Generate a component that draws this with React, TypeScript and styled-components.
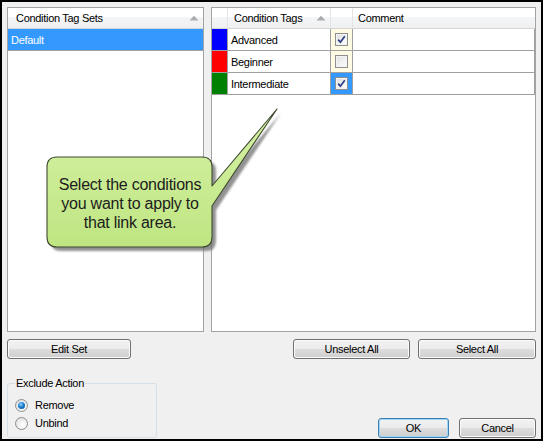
import React from "react";
import styled, { createGlobalStyle } from "styled-components";

const GlobalStyle = createGlobalStyle`
  html, body { margin: 0; padding: 0; background: #f0f0f0; overflow: hidden; }
  body { font-family: "Liberation Sans", Arial, sans-serif; font-size: 11px; letter-spacing: -0.3px; color: #000; }
`;

const Dialog = styled.div`
  position: relative;
  box-sizing: border-box;
  width: 543px;
  height: 441px;
  border: 2px solid #000;
  padding: 5px 5px 1px 5px;
  background: #f0f0f0;
  display: flex;
  flex-direction: column;
`;

const PanelsRow = styled.div`
  display: flex;
  gap: 7px;
  height: 325px;
  flex: none;
`;

const Panel = styled.div<{ $width: number }>`
  box-sizing: border-box;
  width: ${(p) => p.$width}px;
  height: 100%;
  border: 1px solid #a3a3a3;
  background: #fff;
  display: flex;
  flex-direction: column;
`;

const HeaderBar = styled.div<{ $cols?: string }>`
  box-sizing: border-box;
  height: 21px;
  flex: none;
  display: grid;
  grid-template-columns: ${(p) => p.$cols ?? "1fr"};
  border-bottom: 1px solid #d5d5d5;
  background: linear-gradient(#ffffff 0%, #ffffff 45%, #f4f5f7 45%, #eef0f2 100%);
`;

const HeadCell = styled.div<{ $pad?: number; $sep?: boolean }>`
  display: flex;
  align-items: center;
  justify-content: space-between;
  padding-left: ${(p) => p.$pad ?? 0}px;
  padding-right: 4px;
  border-right: ${(p) => (p.$sep ? "1px solid #e3e4e6" : "none")};
  white-space: nowrap;
  overflow: hidden;
`;

const SortArrow = () => (
  <svg width="10" height="6" viewBox="0 0 10 6">
    <path d="M0.5 5.5 L5 0.8 L9.5 5.5 Z" fill="#acacac" />
  </svg>
);

const ListRow = styled.div<{ $selected?: boolean }>`
  box-sizing: border-box;
  height: 22px;
  display: flex;
  align-items: center;
  padding-left: 3px;
  border-bottom: 1px solid #a0a0a0;
  background: ${(p) => (p.$selected ? "#3399ff" : "#fff")};
  color: ${(p) => (p.$selected ? "#fff" : "#000")};
`;

const tableCols = "16px 103px 22px 1fr";

const TableRow = styled.div`
  display: grid;
  grid-template-columns: ${tableCols};
  height: 22px;
`;

const Cell = styled.div<{ $bg?: string; $pad?: number; $center?: boolean }>`
  box-sizing: border-box;
  border-right: 1px solid #a0a0a0;
  border-bottom: 1px solid #a0a0a0;
  background: ${(p) => p.$bg ?? "#fff"};
  display: flex;
  align-items: center;
  justify-content: ${(p) => (p.$center ? "center" : "flex-start")};
  padding-left: ${(p) => p.$pad ?? 0}px;
  white-space: nowrap;
`;

const CheckBoxBox = styled.div`
  box-sizing: border-box;
  width: 13px;
  height: 13px;
  border: 1px solid #8e8f8f;
  background: linear-gradient(135deg, #dcdcdc 0%, #f1f1f1 55%, #ffffff 100%);
  box-shadow: inset 0 0 0 1px #f4f4f4;
  display: flex;
  align-items: center;
  justify-content: center;
`;

const CheckBox = ({ checked }: { checked: boolean }) => (
  <CheckBoxBox>
    {checked && (
      <svg width="11" height="11" viewBox="0 0 11 11">
        <path d="M2.2 5.6 L4.4 8.2 L8.8 2.2" stroke="#2a3d85" strokeWidth="1.7" fill="none" />
      </svg>
    )}
  </CheckBoxBox>
);

const ButtonRow = styled.div`
  margin-top: 7px;
  display: flex;
  justify-content: space-between;
  flex: none;
`;

const ButtonGroup = styled.div<{ $gap: number }>`
  display: flex;
  gap: ${(p) => p.$gap}px;
`;

const Button = styled.button<{ $width: number; $default?: boolean }>`
  box-sizing: border-box;
  width: ${(p) => p.$width}px;
  height: 20px;
  margin: 0;
  padding: 0;
  border: 1px solid ${(p) => (p.$default ? "#3c7fb1" : "#707070")};
  border-radius: 3px;
  background: linear-gradient(#f2f2f2 0%, #ebebeb 50%, #dddddd 50%, #cfcfcf 100%);
  box-shadow: inset 0 0 0 1px ${(p) => (p.$default ? "#9fd6f5" : "#fbfbfb")};
  font-family: "Liberation Sans", Arial, sans-serif;
  font-size: 11px;
  letter-spacing: -0.3px;
  color: #000;
`;

const BottomRow = styled.div`
  flex: 1;
  display: flex;
  justify-content: space-between;
  align-items: flex-end;
`;

const GroupBox = styled.div`
  position: relative;
  box-sizing: border-box;
  width: 150px;
  height: 55px;
  border: 1px solid #d5dfe5;
  border-radius: 3px;
  padding: 12px 0 0 7px;
  display: flex;
  flex-direction: column;
`;

const GroupCaption = styled.span`
  position: absolute;
  left: 7px;
  top: -8px;
  line-height: 14px;
  padding: 0 1px;
  background: #f0f0f0;
`;

const RadioRow = styled.label`
  display: flex;
  align-items: center;
  gap: 7px;
  height: 18px;
`;

const RadioCircle = styled.span<{ $checked?: boolean }>`
  box-sizing: border-box;
  width: 13px;
  height: 13px;
  border-radius: 50%;
  border: 1px solid #8e8f8f;
  background: radial-gradient(circle at 60% 65%, #ffffff 0%, #f0f0f0 45%, #d6d6d6 100%);
  display: flex;
  align-items: center;
  justify-content: center;
  &::after {
    content: "";
    display: ${(p) => (p.$checked ? "block" : "none")};
    width: 7px;
    height: 7px;
    border-radius: 50%;
    background: radial-gradient(circle at 40% 35%, #8fd3ff 0%, #1c7fd0 45%, #0b4a86 100%);
  }
`;

const Callout = styled.div`
  position: absolute;
  left: 38px;
  top: 98px;
  width: 250px;
  height: 160px;
  pointer-events: none;
`;

const CalloutText = styled.div`
  position: absolute;
  left: 7px;
  top: 57px;
  width: 166px;
  height: 92px;
  display: flex;
  align-items: center;
  justify-content: center;
  text-align: center;
  font-family: "Liberation Sans", Arial, sans-serif;
  font-size: 16px;
  letter-spacing: -0.25px;
  line-height: 19px;
  color: #1c1c1c;
`;

const bubblePath =
  "M17 57 H162 Q172 57 172 67 V86 L237 9 L172 106 V137 Q172 147 162 147 H17 Q7 147 7 137 V67 Q7 57 17 57 Z";

const tags = [
  { name: "Advanced", color: "#0000ff", checked: true, selected: false },
  { name: "Beginner", color: "#ff0000", checked: false, selected: false },
  { name: "Intermediate", color: "#008000", checked: true, selected: true },
];

export default function App() {
  return (
    <>
      <GlobalStyle />
      <Dialog>
        <PanelsRow>
          <Panel $width={197}>
            <HeaderBar>
              <HeadCell $pad={8}>
                <span>Condition Tag Sets</span>
                <SortArrow />
              </HeadCell>
            </HeaderBar>
            <ListRow $selected>Default</ListRow>
          </Panel>
          <Panel $width={325}>
            <HeaderBar $cols={tableCols}>
              <HeadCell $sep />
              <HeadCell $sep $pad={6}>
                <span>Condition Tags</span>
                <SortArrow />
              </HeadCell>
              <HeadCell $sep />
              <HeadCell $pad={5}>
                <span>Comment</span>
              </HeadCell>
            </HeaderBar>
            {tags.map((t) => (
              <TableRow key={t.name}>
                <Cell $bg={t.color} />
                <Cell $pad={3}>{t.name}</Cell>
                <Cell $bg={t.selected ? "#3399ff" : "#fffbe5"} $center>
                  <CheckBox checked={t.checked} />
                </Cell>
                <Cell />
              </TableRow>
            ))}
          </Panel>
        </PanelsRow>
        <ButtonRow>
          <Button $width={124}>Edit Set</Button>
          <ButtonGroup $gap={8}>
            <Button $width={117}>Unselect All</Button>
            <Button $width={118}>Select All</Button>
          </ButtonGroup>
        </ButtonRow>
        <BottomRow>
          <GroupBox>
            <GroupCaption>Exclude Action</GroupCaption>
            <RadioRow>
              <RadioCircle $checked />
              Remove
            </RadioRow>
            <RadioRow>
              <RadioCircle />
              Unbind
            </RadioRow>
          </GroupBox>
          <ButtonGroup $gap={10}>
            <Button $width={71} $default>OK</Button>
            <Button $width={77}>Cancel</Button>
          </ButtonGroup>
        </BottomRow>
        <Callout>
          <svg width="250" height="160" viewBox="0 0 250 160">
            <defs>
              <linearGradient id="bubbleFill" x1="0" y1="0" x2="0" y2="1">
                <stop offset="0" stopColor="#d6f2a6" />
                <stop offset="1" stopColor="#bfe582" />
              </linearGradient>
              <filter id="soft" x="-10%" y="-10%" width="120%" height="120%">
                <feGaussianBlur stdDeviation="0.8" />
              </filter>
            </defs>
            <path d={bubblePath} transform="translate(4 4)" fill="#6d6d6d" opacity="0.75" filter="url(#soft)" />
            <path d={bubblePath} fill="url(#bubbleFill)" stroke="#3f4a30" strokeWidth="1.1" strokeLinejoin="round" />
          </svg>
          <CalloutText>
            Select the conditions
            <br />
            you want to apply to
            <br />
            that link area.
          </CalloutText>
        </Callout>
      </Dialog>
    </>
  );
}
